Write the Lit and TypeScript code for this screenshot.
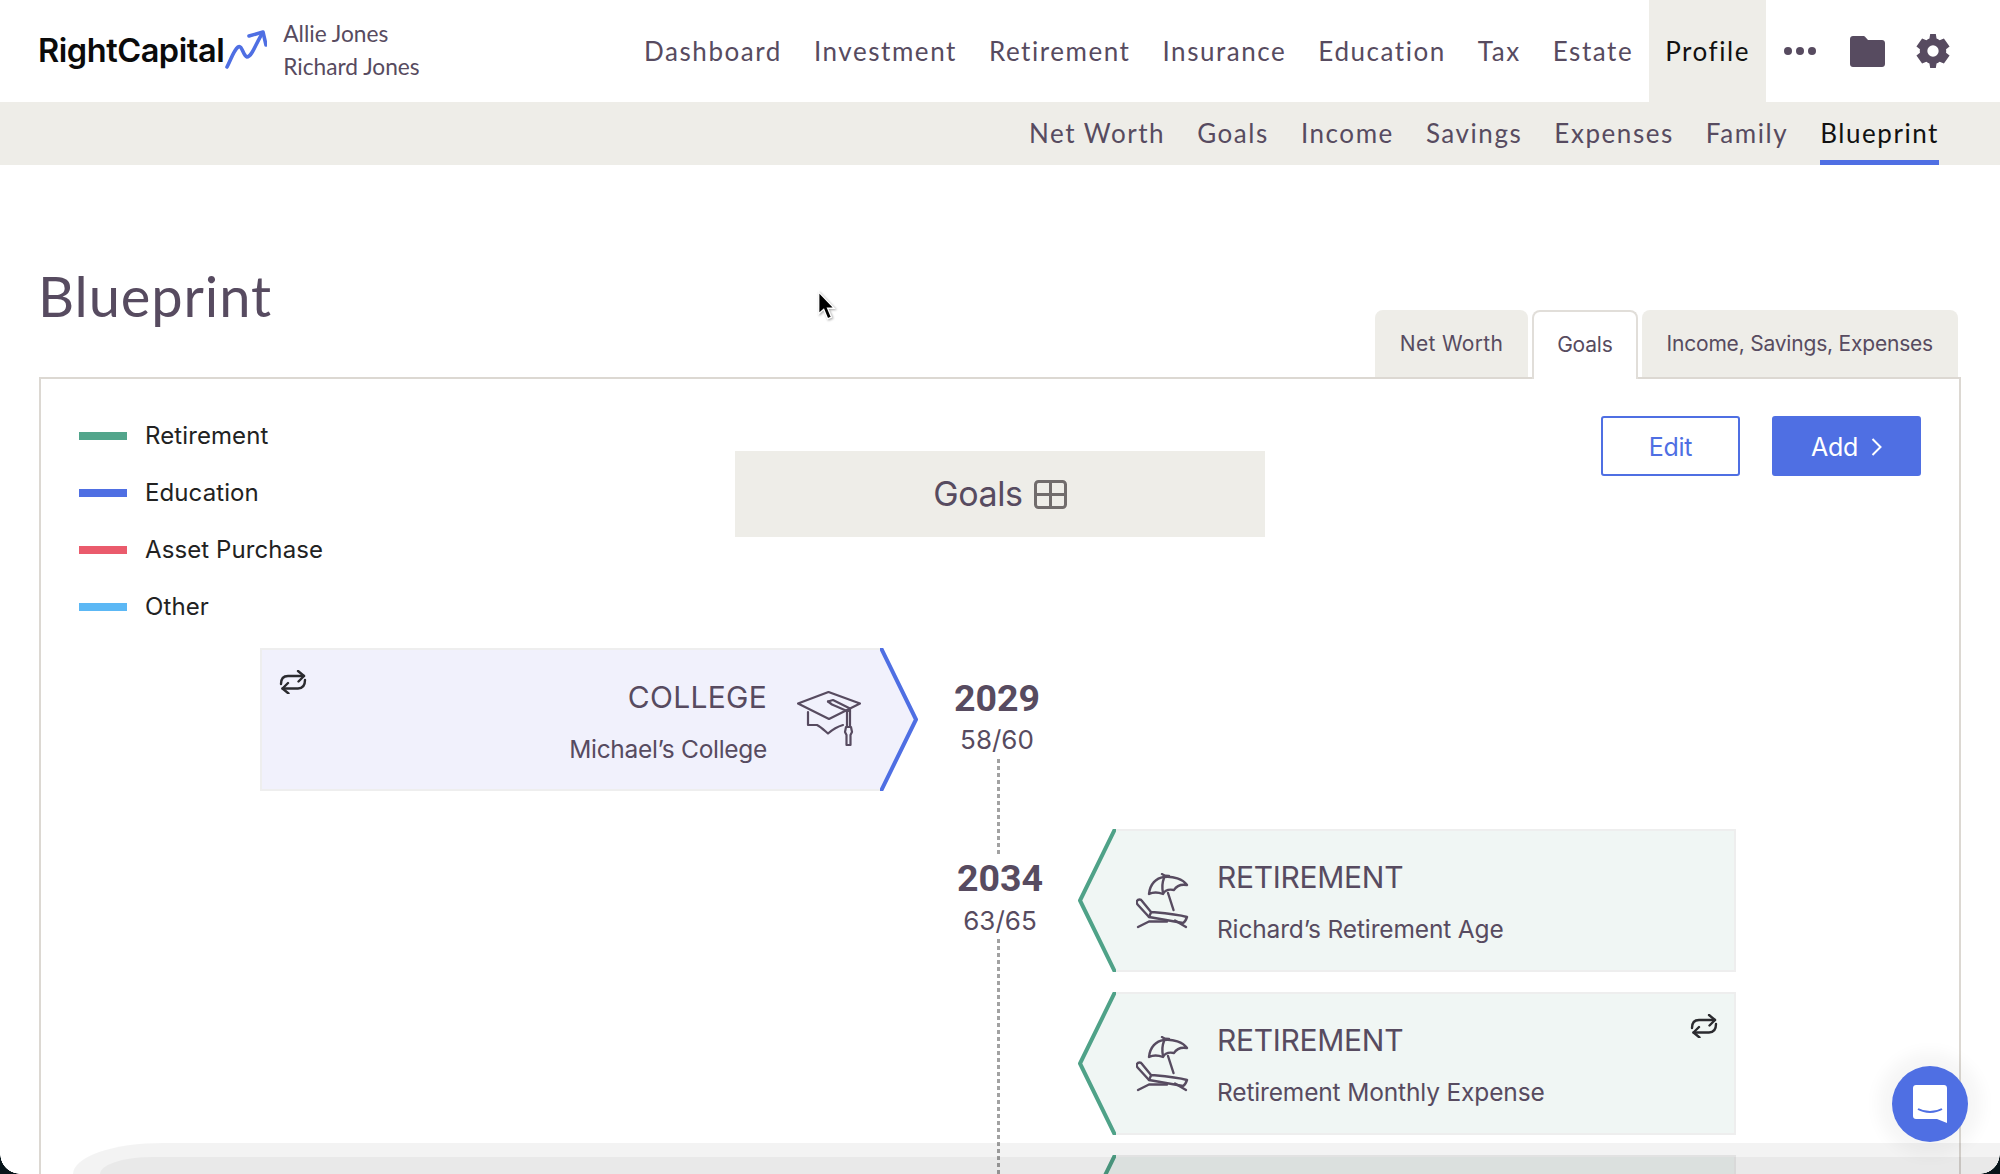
import { LitElement, html, css, svg } from "lit";
import { customElement } from "lit/decorators.js";

const repeatIcon = html`<svg class="repeat" viewBox="0 0 28 24" fill="none" stroke="#2b2b2f" stroke-width="2.4" stroke-linecap="round" stroke-linejoin="round">
  <path d="M2 14C2 9 4 6 9 6H25"/><path d="M19 1L25 6L19.500 11.500"/>
  <path d="M26 10C26 15 24 18.500 19 18.500H3.500"/><path d="M9 13L3.500 18.500L9.500 23.500"/></svg>`;

const capIcon = html`<svg class="cap" viewBox="0 0 64 57" fill="none" stroke="#574b60" stroke-width="2.2" stroke-linejoin="round" stroke-linecap="round">
  <path d="M1 12.5L31.5 1L63 12.5L32 28Z"/>
  <path d="M11 21V34H20C24 36 28 40 31 42.500C35 39 39 36 46 34"/>
  <path d="M31 10.500L36 9L53 17.500V36"/><path d="M31 10.500L35 13.500L50 20V36"/>
  <path d="M53 20L51.500 20"/><path d="M49 36H54L55 41L53.500 44V54H49.500V44L48 41Z"/></svg>`;

const chairIcon = html`<svg class="chair" viewBox="0 0 53 56" fill="none" stroke="#574b60" stroke-width="2.400" stroke-linecap="round" stroke-linejoin="round">
  <path d="M13 21C14 11 20 5 28 4C37 3 47 6 51 12C45 11 41 12 38 17C33 16 29 17 27 21C22 19 17 19 13 21Z"/>
  <path d="M26 1C28 3 30 3 33 3"/><path d="M28 5C26 10 26 15 27 20"/><path d="M32 20L37.500 37"/>
  <path d="M1 28C2 26 5 26 6 28L15 39C26 40 40 41 51 44C50 47 49 49 47 50C36 48 24 46 13 44L2 32C1 31 0.500 29 1 28Z"/>
  <path d="M15 39.500L13 44"/>
  <path d="M2 54L13 48.500H31"/><path d="M39 47.500L50 54"/></svg>`;

const arrowLogo = html`<svg class="logo-arrow" viewBox="0 0 42 40" fill="none" stroke="#4f6fe3" stroke-width="3.600" stroke-linecap="round" stroke-linejoin="round">
  <path d="M2 38C6 30 9 21 13 18C17 15 18 27 22 28C27 28 31 14 37 5"/><path d="M24 7L38 3L41 16"/></svg>`;

@customElement("year-col")
class YearCol extends LitElement {
  static properties = { year: {}, age: {}, lead: { type: Boolean } };
  declare year: string; declare age: string; declare lead: boolean;
  static styles = css`
    :host { display: flex; flex-direction: column; align-items: center; }
    .dash { width: 3px; background: repeating-linear-gradient(to bottom, #a2a2a2 0 4px, transparent 4px 7px); }
    .lead { height: 26px; }
    .tail { flex: 1; }
    .year { font: 700 37.500px/46px Roboto, sans-serif; color: #574b60; margin-top: 27px; }
    .year.follow { margin-top: 0; }
    .age { font: 400 26px/34px Inter, sans-serif; color: #574b60; letter-spacing: 0; }
    .txt { display: flex; flex-direction: column; align-items: center; }
    .txt.l { transform: translateX(-1px); }
    .txt.l .age { margin: 2px 0 2px; }
    .txt.r { transform: translateX(2px); }
    .txt.r .age { margin: 3px 0 1px; }
  `;
  render() {
    return html`${this.lead ? html`<div class="dash lead"></div>` : ""}
      <div class="txt ${this.lead ? "r" : "l"}">
        <div class="year ${this.lead ? "follow" : ""}">${this.year}</div>
        <div class="age">${this.age}</div>
      </div>
      <div class="dash tail"></div>`;
  }
}

@customElement("goal-card")
class GoalCard extends LitElement {
  static properties = { kind: {}, title: {}, sub: {}, repeat: { type: Boolean } };
  declare kind: string; declare title: string; declare sub: string; declare repeat: boolean;
  static styles = css`
    :host { display: flex; height: 143px; width: 658px; position: relative; font-family: Inter, sans-serif; color: #574b60; }
    .body { flex: 1; display: flex; align-items: center; box-sizing: border-box; border-top: 2px solid #eeeeee; border-bottom: 2px solid #eeeeee; }
    .edu .body { background: #f1f1fc; border-left: 2px solid #eeeeee; justify-content: flex-end; padding-right: 19px; text-align: right; }
    .ret .body { background: #f0f6f4; border-right: 2px solid #eeeeee; padding-left: 20px; }
    .wrap { display: flex; flex: 1; }
    .tip { width: 38px; height: 143px; flex: none; display: block; }
    .texts { display: flex; flex-direction: column; padding-top: 4px; }
    .ret .texts { padding-top: 2px; }
    .edu .texts { margin-right: 30px; }
    .ret .texts { margin-left: 28px; }
    .t { font-size: 30px; line-height: 36px; letter-spacing: -0.3px; }
    .edu .t { letter-spacing: 0.3px; }
    .s { font-size: 24.500px; line-height: 30px; margin-top: 19px; letter-spacing: -0.15px; }
    .edu .s { letter-spacing: -0.3px; }
    .rp { position: absolute; top: 22px; }
    .edu .rp { left: 19px; }
    .ret .rp { right: 18px; }
    .repeat { width: 28px; height: 24px; display: block; }
    .cap { width: 64px; height: 57px; display: block; }
    .chair { width: 53px; height: 56px; display: block; }
  `;
  render() {
    const isEdu = this.kind === "edu";
    const color = isEdu ? "#4f6fe3" : "#4fa288";
    const fill = isEdu ? "#f1f1fc" : "#f0f6f4";
    const pts = isEdu ? "0,-2 36,71.500 0,145" : "38,-2 2,71.500 38,145";
    const tip = html`<svg class="tip" viewBox="0 0 38 143">${svg`<polygon points=${pts} fill=${fill}/><polyline points=${pts} fill="none" stroke=${color} stroke-width="4"/>`}</svg>`;
    const texts = html`<div class="texts"><div class="t">${this.title}</div><div class="s">${this.sub}</div></div>`;
    return html`<div class="wrap ${this.kind}">
      ${isEdu ? "" : tip}
      <div class="body">
        ${isEdu ? html`${texts}${capIcon}` : html`${chairIcon}${texts}`}
      </div>
      ${isEdu ? tip : ""}
      ${this.repeat ? html`<div class="rp">${repeatIcon}</div>` : ""}
    </div>`;
  }
}

@customElement("app-root")
class AppRoot extends LitElement {
  static styles = css`
    :host { display: block; position: relative; width: 2000px; height: 1174px; overflow: hidden; background: #fff; font-family: Lato, sans-serif; color: #574b60; }
    .top { height: 102px; display: flex; align-items: center; padding-left: 38px; }
    .logo { font: 600 32.500px/38px Inter, sans-serif; color: #0b0b0b; letter-spacing: -0.45px; }
    .logo-arrow { width: 42px; height: 40px; margin-left: 1px; margin-top: -4px; flex: none; }
    .names { margin-left: 16px; font: 400 22.700px/33px Lato, sans-serif; margin-top: -2px; }
    .nav { margin-left: auto; display: flex; align-self: stretch; font: 400 26px/102px Lato, sans-serif; letter-spacing: 1.550px; }
    .nav a { padding: 0 16px; }
    .nav a.on { background: #eeede8; color: #111; }
    .tools { display: flex; align-items: center; margin-right: 50px; margin-left: 18px; }
    .dots { width: 32px; height: 8px; display: flex; justify-content: space-between; }
    .dots i { width: 8px; height: 8px; border-radius: 50%; background: #574b60; }
    .folder { width: 35px; height: 31px; margin-left: 34px; }
    .gear { width: 34px; height: 34px; margin-left: 31px; }
    .sub { height: 63px; background: #eeede8; display: flex; justify-content: flex-end; padding-right: 61px; gap: 32px; font: 400 26px/63px Lato, sans-serif; letter-spacing: 1.560px; box-sizing: border-box; }
    .sub a.on { color: #111; box-shadow: inset 0 -5px 0 #4f6fe3; }
    main { padding: 0 39px 0 39px; }
    .head { height: 212px; display: flex; align-items: flex-end; justify-content: space-between; }
    h1 { margin: 0 0 47px -1px; font: 400 56px/68px Lato, sans-serif; letter-spacing: 0.9px; color: #574b60; }
    .tabs { display: flex; gap: 4px; margin-right: 3px; position: relative; z-index: 1; font: 400 21px/67px Inter, sans-serif; letter-spacing: -0.2px; margin-bottom: -2px; }
    .tabs a { background: #eeede8; padding: 0 25px; border-radius: 8px 8px 0 0; height: 67px; margin-bottom: 2px; }
    .tabs a:first-child { letter-spacing: 0.3px; }
    .tabs a.on { background: #fff; border: 2px solid #e1ded9; border-bottom: 0; margin-bottom: 0; height: 69px; padding: 0 23px; line-height: 65px; box-sizing: border-box; }
    .panel { border: 2px solid #dcd8d2; border-bottom: 0; height: 800px; box-sizing: border-box; }
    .panel-top { height: 269px; display: grid; grid-template-columns: 1fr 530px 1fr; }
    .legend { padding: 28px 0 0 38px; color: #222; font: 400 24px/57px Inter, sans-serif; letter-spacing: 0.1px; }
    .legend div { display: flex; align-items: center; height: 57px; }
    .legend i { width: 48px; height: 8px; margin-right: 18px; }
    .goals { margin-top: 72px; height: 86px; background: #eeede8; display: flex; align-items: center; justify-content: center; gap: 11px; font: 400 34px/86px Inter, sans-serif; letter-spacing: -0.4px; }
    .goals svg { width: 33px; height: 29px; }
    .btns { display: flex; justify-content: flex-end; gap: 32px; padding: 37px 38px 0 0; font: 400 25px/56px Inter, sans-serif; letter-spacing: -0.3px; }
    .btn { height: 60px; box-sizing: border-box; border: 2px solid #4f6fe3; border-radius: 3px; display: flex; align-items: center; justify-content: center; color: #4f6fe3; padding-top: 1px; }
    .btn.edit { width: 139px; }
    .btn.add { width: 149px; background: #4f6fe3; color: #fff; gap: 13px; }
    .btn svg { width: 11px; height: 20px; }
    .tl { display: grid; grid-template-columns: 219px 658px 160px 658px; }
    .gap { padding-bottom: 38px; }
    .stack { display: flex; flex-direction: column; gap: 20px; }
    .shade { position: absolute; pointer-events: none; }
    .s1 { left: 73px; right: 0; top: 1143px; bottom: 0; background: rgba(0,0,0,.048); border-top-left-radius: 92px 32px; }
    .s2 { left: 100px; right: 0; top: 1157px; bottom: 0; background: rgba(0,0,0,.04); border-top-left-radius: 55px 18px; }
    .chat { position: absolute; left: 1892px; top: 1066px; width: 76px; height: 76px; border-radius: 50%; background: #4f6fe3; box-shadow: 0 0 16px 14px rgba(0,0,0,.04); display: flex; align-items: center; justify-content: center; }
    .chat svg { width: 34px; height: 38px; }
    .corner { position: absolute; width: 20px; height: 20px; bottom: 0; }
    .cl { left: 0; background: radial-gradient(circle at 100% 0, transparent 19.500px, #07151a 20px); }
    .cr { right: 0; background: radial-gradient(circle at 0 0, transparent 19.500px, #07151a 20px); }
    .cursor { position: absolute; left: 817px; top: 291px; width: 19px; height: 30px; filter: drop-shadow(1px 1px 1px rgba(0,0,0,.35)); }
  `;
  render() {
    const nav = ["Dashboard", "Investment", "Retirement", "Insurance", "Education", "Tax", "Estate"];
    const sub = ["Net Worth", "Goals", "Income", "Savings", "Expenses", "Family"];
    const legend = [["Retirement", "#52a58b"], ["Education", "#4f6fe3"], ["Asset Purchase", "#ea5b6c"], ["Other", "#5cb8f5"]];
    return html`
      <header class="top">
        <div class="logo">RightCapital</div>${arrowLogo}
        <div class="names">Allie Jones<br />Richard Jones</div>
        <nav class="nav">
          ${nav.map((n) => html`<a>${n}</a>`)}<a class="on">Profile</a>
        </nav>
        <div class="tools">
          <div class="dots"><i></i><i></i><i></i></div>
          <svg class="folder" viewBox="0 0 35 31"><path fill="#574b60" d="M0 3C0 1.300 1.300 0 3 0H13C14 0 15 .5 15.500 1.200L18 4H32C33.700 4 35 5.300 35 7V28C35 29.700 33.700 31 32 31H3C1.300 31 0 29.700 0 28Z"/></svg>
          <svg class="gear" viewBox="0 0 24 24"><path fill="#574b60" fill-rule="evenodd" d="M14 0L14.500 3.200C15.300 3.500 16 3.900 16.700 4.400L19.700 3.200L23.700 8.800L21.200 10.800C21.300 11.200 21.300 11.600 21.300 12C21.300 12.400 21.300 12.800 21.200 13.200L23.700 15.200L19.700 20.800L16.700 19.600C16 20.100 15.300 20.500 14.500 20.800L14 24H10L9.500 20.800C8.700 20.500 8 20.100 7.300 19.600L4.300 20.800L.3 15.200L2.800 13.200C2.700 12.800 2.700 12.400 2.700 12C2.700 11.600 2.700 11.200 2.800 10.800L.3 8.800L4.300 3.200L7.300 4.400C8 3.900 8.700 3.500 9.500 3.200L10 0ZM12 8A4 4 0 1 0 12 16A4 4 0 1 0 12 8Z"/></svg>
        </div>
      </header>
      <nav class="sub">${sub.map((n) => html`<a>${n}</a>`)}<a class="on">Blueprint</a></nav>
      <main>
        <div class="head">
          <h1>Blueprint</h1>
          <div class="tabs"><a>Net Worth</a><a class="on">Goals</a><a>Income, Savings, Expenses</a></div>
        </div>
        <section class="panel">
          <div class="panel-top">
            <div class="legend">${legend.map(([n, c]) => html`<div><i style="background:${c}"></i>${n}</div>`)}</div>
            <div class="goals">Goals
              <svg viewBox="0 0 33 29" fill="none" stroke="#716c6c" stroke-width="3"><rect x="1.500" y="1.500" width="30" height="26" rx="3"/><path d="M16.500 1.500V27.500M1.500 14.500H31.500"/></svg>
            </div>
            <div class="btns"><div class="btn edit">Edit</div>
              <div class="btn add">Add <svg viewBox="0 0 11 20" fill="none" stroke="#fff" stroke-width="2"><path d="M1.500 2L9.500 10L1.500 18"/></svg></div></div>
          </div>
          <div class="tl">
            <div></div>
            <div class="gap"><goal-card kind="edu" title="COLLEGE" sub="Michael’s College" repeat></goal-card></div>
            <year-col year="2029" age="58/60"></year-col>
            <div></div>
            <div></div><div></div>
            <year-col lead year="2034" age="63/65"></year-col>
            <div class="stack">
              <goal-card kind="ret" title="RETIREMENT" sub="Richard’s Retirement Age"></goal-card>
              <goal-card kind="ret" title="RETIREMENT" sub="Retirement Monthly Expense" repeat></goal-card>
              <goal-card kind="ret" title="" sub=""></goal-card>
            </div>
          </div>
        </section>
      </main>
      <svg class="cursor" viewBox="0 0 17 27"><path d="M1.500 1V20.500L6 16.500L9.500 25L13 23.500L9.500 15.500H15.500Z" fill="#000" stroke="#fff" stroke-width="1.200"/></svg>
      <div class="shade s1"></div><div class="shade s2"></div>
      <div class="chat"><svg viewBox="0 0 34 38"><path fill="#fff" d="M3 0H31C32.700 0 34 1.300 34 3V38L24 34H3C1.300 34 0 32.700 0 31V3C0 1.300 1.300 0 3 0Z"/><path d="M5 24C12 28 22 28 29 24" fill="none" stroke="#4f6fe3" stroke-width="2"/></svg></div>
      <div class="corner cl"></div><div class="corner cr"></div>
    `;
  }
}
